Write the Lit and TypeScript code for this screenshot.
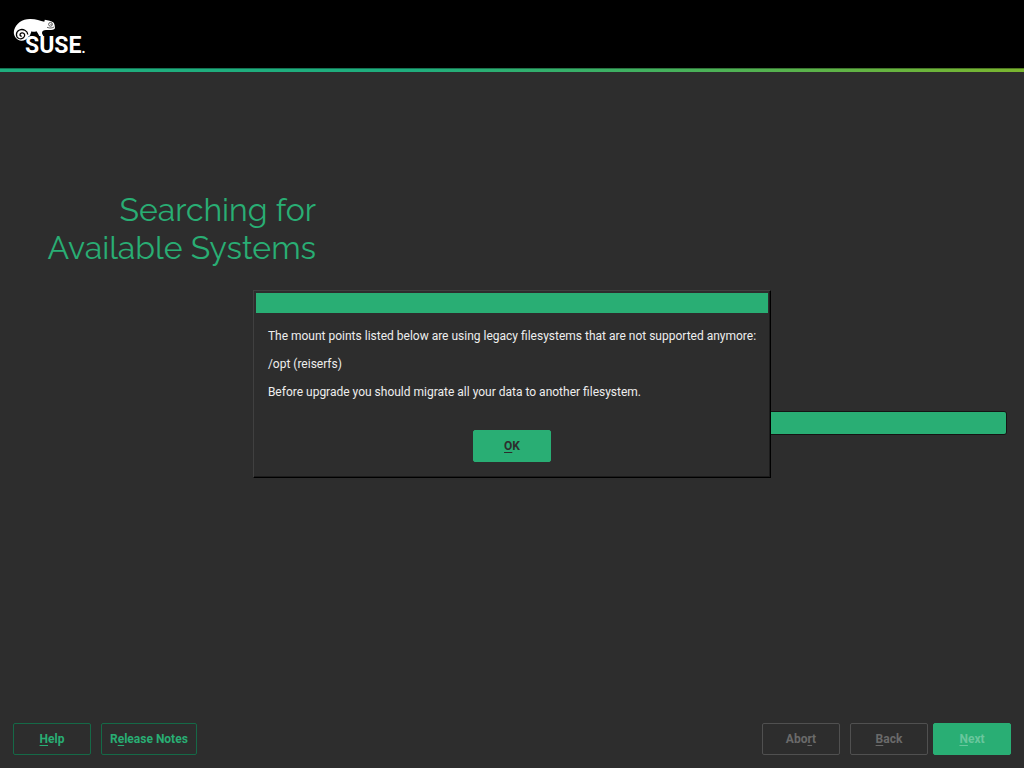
import { LitElement, html, css, svg } from "lit";
import { customElement, property, state } from "lit/decorators.js";

/** Push button whose label underlines its keyboard mnemonic. */
@customElement("y-button")
class YButton extends LitElement {
  @property() label = "";
  @property({ type: Number }) mnemonic = 0;
  @property() variant = "outline";
  @property({ type: Boolean }) disabled = false;

  static styles = css`
    :host { display: block; }
    .button {
      box-sizing: border-box;
      display: block;
      min-width: 78px;
      height: 32px;
      padding: 0 8px;
      font: 700 12px/14px Roboto, sans-serif;
      color: #29ae74;
      background: transparent;
      border: 1px solid #156947;
      border-radius: 2px;
      white-space: nowrap;
    }
    .button:disabled { color: #6a6a6a; border-color: #505050; }
    .primary { color: #2d2d2d; background: #29ae74; border-color: #29ae74; }
    .primary:disabled { color: #69c69d; border-color: #29ae74; }
    .key {
      text-decoration: underline 1px;
      text-underline-offset: 2px;
      text-decoration-skip-ink: none;
    }
  `;

  render() {
    const m = this.mnemonic;
    return html`<button
      class="button ${this.variant}"
      ?disabled=${this.disabled}
    >${this.label.slice(0, m)}<span class="key">${this.label[m]}</span>${this.label.slice(m + 1)}</button>`;
  }
}

const logo = svg`
  <path fill="#fff" d="M28.500 37C26 40.500 21.500 41.800 18 39.800C14.500 37.500 13 33.500 14.300 29.500C16 23.500 22 19 30 18.900C36 18.800 40 20.500 44.300 21.800L44.800 19.700C48 20.200 51.500 21 53.500 22.500C54.500 23.500 54.600 25.500 55 27C55.300 29.300 53.500 29.800 51 29.900L46 30C43.500 30 42.300 30.800 42 32.800C41.900 33.800 42.800 34.800 43.300 36H39.300C38.500 34.300 37.500 32.500 36.500 31.200C34.500 32 33 32 31.500 31.300L29.800 35.800L28.500 36Z"/>
  <path fill="none" stroke="#000" stroke-width="1.300" d="M27.800 34.500C27.500 30.500 23 28.600 19.500 30C15.500 31.800 15.500 37 19 38.500C22.500 39.700 25.500 37 24.500 34.300C23.500 32 20 32.500 20 34.800C20 35.800 21 36.300 21.800 36"/>
  <circle cx="50.500" cy="24.300" r="1.900" fill="#fff" stroke="#000" stroke-width=".6"/>
  <circle cx="51" cy="24.300" r=".5" fill="#000"/>
  <path fill="none" stroke="#000" stroke-width=".6" d="M47 27.300C50 28.600 52.500 28 54.300 26.800"/>
  <text class="wordmark" x="25" y="53">SUSE<tspan class="dot">.</tspan></text>
`;

@customElement("app-root")
class AppRoot extends LitElement {
  @state() private open = true;

  static styles = css`
    :host {
      position: relative;
      display: flex;
      flex-direction: column;
      min-height: 100vh;
      background: #2d2d2d;
      color: #eee;
      font: 12px/14px Roboto, sans-serif;
    }
    .header { height: 68px; background: #000; }
    .logo { display: block; }
    .wordmark {
      font: 700 23px Roboto, sans-serif;
      fill: #fff;
    }
    .dot { font-size: 14px; }
    .stripe {
      height: 4px;
      background: linear-gradient(90deg, #1fae7e 0%, #1fae7e 40%, #7bb62f 100%);
      box-shadow: inset 0 1px #0005;
    }
    .main {
      flex: 1;
      display: grid;
      grid-template-columns: 316px 1fr;
      column-gap: 24px;
      align-items: start;
      padding: 119px 17px 0 0;
    }
    .title {
      margin: 0;
      text-align: right;
      font: 400 32px/38px Raleway, Lato, sans-serif;
      color: #29ae74;
    }
    .progress {
      box-sizing: border-box;
      width: 100%;
      height: 24px;
      margin-top: 220px;
      border: 1px solid #141414;
      border-radius: 3px;
      appearance: none;
      background: #29ae74;
      overflow: hidden;
    }
    .progress::-webkit-progress-bar { background: #2d2d2d; }
    .progress::-webkit-progress-value { background: #29ae74; }
    .footer { display: flex; gap: 10px; padding: 0 13px 13px; }
    .spacer { flex: 1; }
    .forward { display: flex; gap: 5px; }
    .dialog {
      position: absolute;
      inset: 0;
      box-sizing: border-box;
      width: fit-content;
      height: fit-content;
      margin: auto;
      padding: 2px;
      color: inherit;
      background: #2d2d2d;
      border: 1px solid;
      border-color: #404040 #000 #000 #404040;
      box-shadow: inset -1px -1px #1c1c1c;
    }
    .caption { height: 20px; background: #29ae74; }
    .body {
      display: grid;
      gap: 14px;
      padding: 16px 12px 13px;
    }
    .text { margin: 0; }
    .actions { display: flex; justify-content: center; padding-top: 17px; }
  `;

  render() {
    return html`
      <header class="header">
        <svg class="logo" width="100" height="68" viewBox="0 0 100 68" role="img" aria-label="SUSE">${logo}</svg>
      </header>
      <div class="stripe"></div>
      <main class="main">
        <h1 class="title" id="title">Searching for<br />Available Systems</h1>
        <progress class="progress" max="100" value="100" aria-labelledby="title"></progress>
      </main>
      <footer class="footer">
        <y-button label="Help"></y-button>
        <y-button label="Release Notes" mnemonic="1"></y-button>
        <div class="spacer"></div>
        <y-button label="Abort" mnemonic="3" disabled></y-button>
        <div class="forward">
          <y-button label="Back" disabled></y-button>
          <y-button label="Next" variant="primary" disabled></y-button>
        </div>
      </footer>
      <dialog class="dialog" ?open=${this.open}>
        <div class="caption"></div>
        <div class="body">
          <p class="text">The mount points listed below are using legacy filesystems that are not supported anymore:</p>
          <p class="text">/opt (reiserfs)</p>
          <p class="text">Before upgrade you should migrate all your data to another filesystem.</p>
          <div class="actions">
            <y-button label="OK" variant="primary" @click=${() => (this.open = false)}></y-button>
          </div>
        </div>
      </dialog>
    `;
  }
}
